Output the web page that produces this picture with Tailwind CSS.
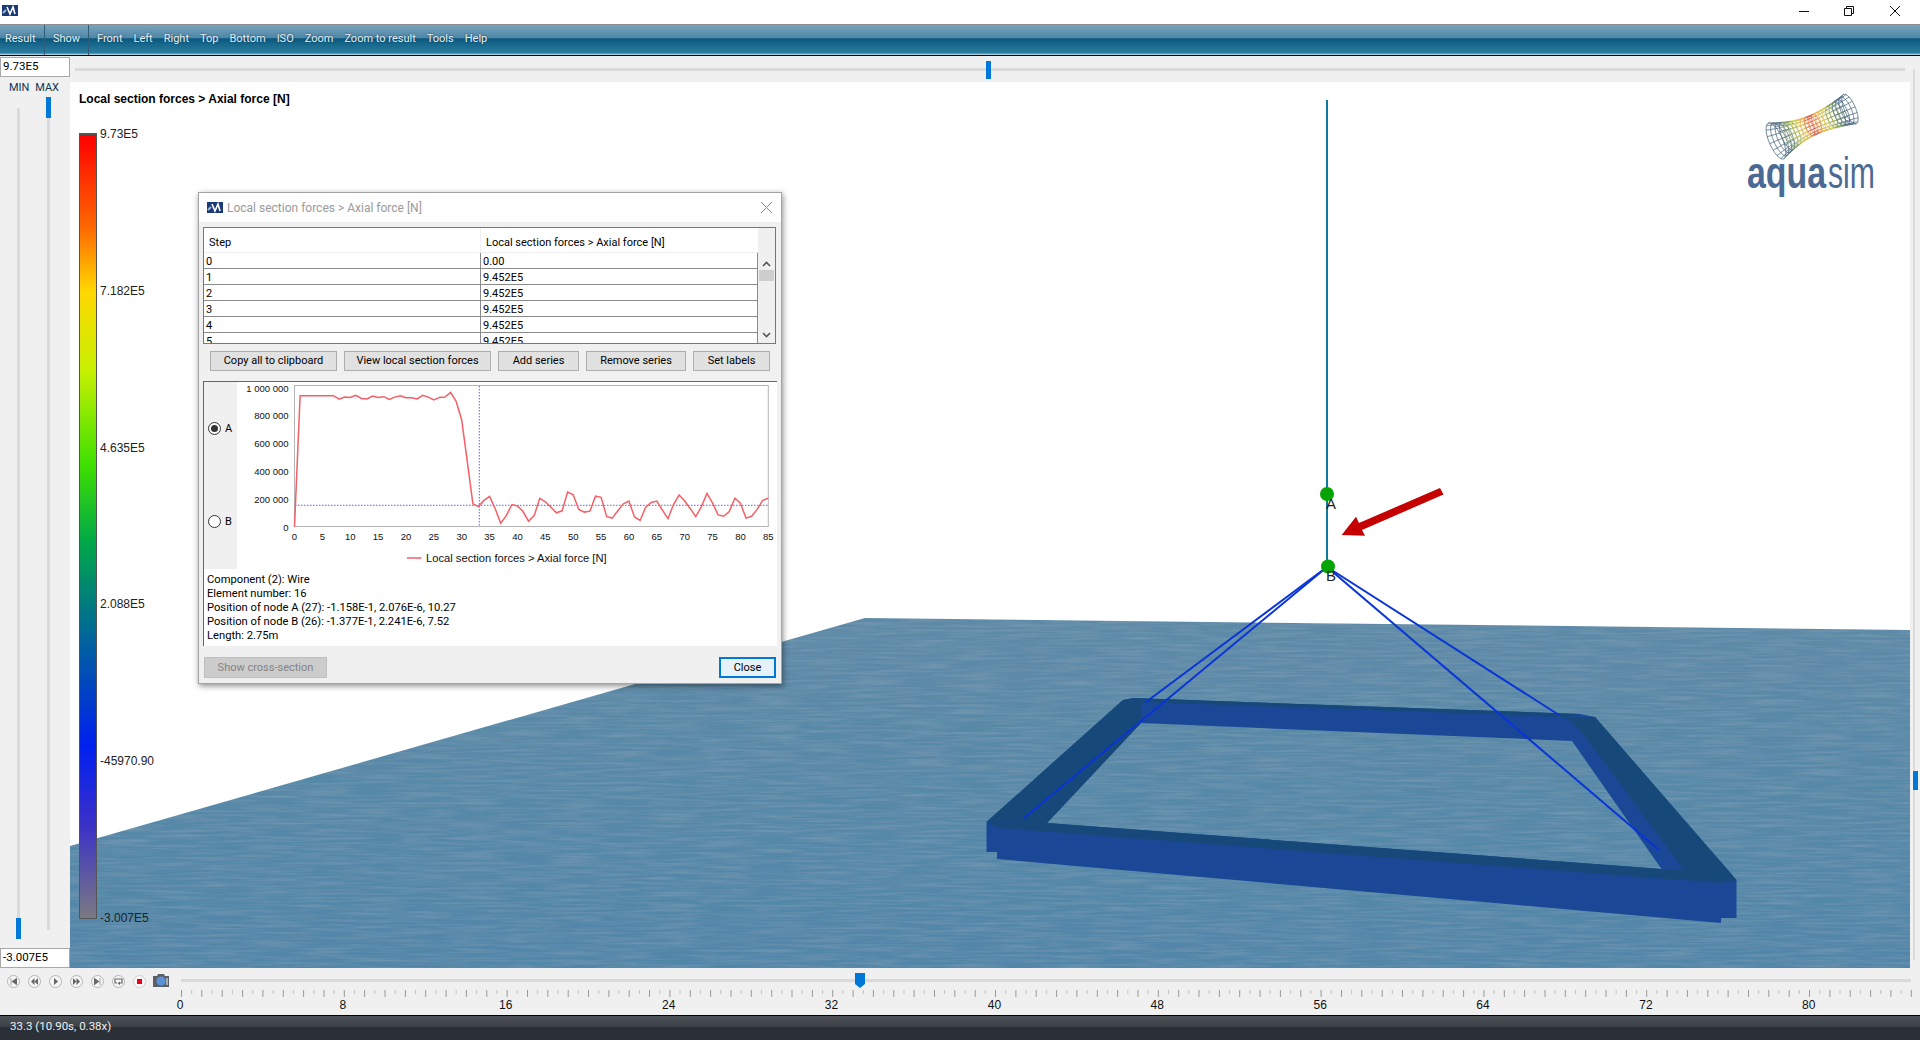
<!DOCTYPE html>
<html lang="en">
<head>
    <meta charset="UTF-8">
    <title>Aquasim result viewer</title>
    <script src="https://cdn.jsdelivr.net/npm/@tailwindcss/browser@4"></script>
</head>
<body class="w-[1920px] h-[1040px] overflow-hidden flex flex-col bg-[#f0f0f0] text-black text-[11px] font-['Roboto',sans-serif]">
    <!-- Title bar -->
    <div class="h-6 shrink-0 bg-white flex items-center justify-between">
        <svg class="ml-[2px] mb-[3px]" width="16" height="11" viewBox="0 0 16 11"><rect width="16" height="11" fill="#1b3a78"/><path d="M5 2 8 9 11 2 13 9" fill="none" stroke="#fff" stroke-width="1.6"/><path d="M1 8 4 5" stroke="#9fb4d8" stroke-width="2"/></svg>
        <div class="flex items-center text-black mb-[2px]">
            <svg width="10" height="10" viewBox="0 0 10 10" class="mr-[35px]"><path d="M0 5.5H10" stroke="#111" stroke-width="1"/></svg>
            <svg width="10" height="10" viewBox="0 0 10 10" class="mr-[36px]"><path d="M.5 2.5h7v7h-7zM2.5 2.5v-2h7v7h-2" fill="none" stroke="#111"/></svg>
            <svg width="10" height="10" viewBox="0 0 10 10" class="mr-[20px]"><path d="M0 0 10 10M10 0 0 10" stroke="#111"/></svg>
        </div>
    </div>

    <!-- Toolbar -->
    <div class="h-8 shrink-0 flex items-center border-t border-[#8b8f92] border-b border-b-black text-[#e4f0f6] text-[11px] [text-shadow:0_0_2px_#0b3b58] bg-[linear-gradient(#79a3bc_0%,#4f87a8_42%,#0b587f_46%,#2c7fa0_94%,#9fd0e2_97%)]">
        <span class="w-[45px] h-full flex items-center pl-[5px] pb-[2px] border-r border-[#2e5b75]">Result</span>
        <span class="w-[44px] h-full flex items-center pl-[8px] pb-[2px] border-r border-[#2e5b75]">Show</span>
        <div class="flex items-center pl-[8px] pb-[2px] gap-[11px]">
            <span>Front</span><span>Left</span><span>Right</span><span>Top</span><span>Bottom</span><span>ISO</span><span>Zoom</span><span>Zoom to result</span><span>Tools</span><span>Help</span>
        </div>
    </div>

    <!-- Middle area -->
    <div class="flex-1 min-h-0 flex relative">
        <!-- Min / max column -->
        <div class="w-[70px] shrink-0 flex flex-col">
            <div class="mt-px h-5 border border-[#a8a8a8] bg-white px-[2px] leading-[16px] text-[11.5px]">9.73E5</div>
            <div class="flex justify-between pl-[9px] pr-[11px] mt-[4px] text-[11px] text-[#123456] leading-[14px]"><span>MIN</span><span>MAX</span></div>
            <div class="flex-1 flex pl-[17px] gap-[27px]">
                <div class="relative w-[3px] bg-[#dadada] mt-[13px] mb-[9px]">
                    <div class="absolute -left-[1px] bottom-0 w-[5px] h-[21px] bg-[#0078d7]"></div>
                </div>
                <div class="relative w-[3px] bg-[#dadada] mt-[13px] mb-[18px]">
                    <div class="absolute -left-[1px] -top-[11px] w-[5px] h-[21px] bg-[#0078d7]"></div>
                </div>
            </div>
            <div class="h-[20px] border border-[#a8a8a8] bg-white px-[2px] leading-[16px] text-[11.5px]">-3.007E5</div>
        </div>

        <div class="flex-1 min-w-0 flex flex-col">
            <!-- Top slider -->
            <div class="h-[26px] shrink-0 relative flex items-center pl-[5px] pr-[15px] pt-[1px]">
                <div class="w-full h-[3px] bg-[#dadada]"></div>
                <div class="absolute left-[916px] top-[5px] w-[5px] h-[18px] bg-[#0078d7]"></div>
            </div>

            <div class="flex-1 min-h-0 flex">
                <!-- 3D viewport -->
                <div class="relative flex-1 bg-white overflow-hidden">
                    <svg id="scene" class="absolute inset-0" width="1840" height="886" viewBox="70 82 1840 886">
                        <defs>
                            <linearGradient id="sea" x1="0" y1="0" x2="0" y2="1"><stop offset="0" stop-color="#5d8aa7"/><stop offset="1" stop-color="#5186a8"/></linearGradient>
                            <filter id="water" x="0" y="0" width="100%" height="100%">
                                <feTurbulence type="fractalNoise" baseFrequency="0.02 0.4" numOctaves="3" seed="4" result="n"/>
                                <feColorMatrix in="n" type="matrix" values="0 0 0 0 1  0 0 0 0 1  0 0 0 0 1  0.14 0 0 0 -0.05" result="w"/>
                                <feComposite in="w" in2="SourceGraphic" operator="in" result="t"/>
                                <feMerge><feMergeNode in="SourceGraphic"/><feMergeNode in="t"/></feMerge>
                            </filter>
                        </defs>
                        <polygon points="70,846 865,618 1910,630 1910,968 70,968" fill="url(#sea)" filter="url(#water)"/>

                        <!-- floating frame -->
                        <polygon points="986.5,822 1123,700 1133.5,698 1580,714 1595,717 1736.5,880 1736.5,918 1721,918 1721,923 997,859 997,852 986.5,852 986.5,822 1047,823 1661.5,869 1572,741 1141,723 1047,823" fill="#1a4896" fill-rule="evenodd"/>
                        <polygon points="986.5,822 1123,700 1133.5,698 1141,702 1141,723 1047,823" fill="#16497a"/>
                        <polygon points="1133.5,698 1580,714 1565,717 1141,702" fill="#16497a"/>
                        <polygon points="1565,717 1595,717 1736.5,880 1720,883 1684,870 1580,730" fill="#16497a"/>
                        <polygon points="986.5,822 1047,823 1661.5,869 1684,870 1736.5,880 1720,883 998,828" fill="#16497a"/>

                        <!-- wires -->
                        <g stroke="#0a35d6" stroke-width="2" fill="none">
                            <path d="M1327 567 1146 702"/>
                            <path d="M1327 567 1024 818"/>
                            <path d="M1327 567 1559 715"/>
                            <path d="M1327 567 1659 850"/>
                        </g>
                        <path d="M1327 100V567" stroke="#0e7a9e" stroke-width="2"/>
                        <circle cx="1327" cy="494" r="7" fill="#04a404"/>
                        <circle cx="1328" cy="566.5" r="7" fill="#04a404"/>
                        <text x="1326" y="509" font-family="Liberation Sans" font-size="15" fill="#222">A</text>
                        <text x="1326" y="581" font-family="Liberation Sans" font-size="15" fill="#222">B</text>

                        <!-- red arrow -->
                        <polygon points="1440,488 1443.5,494.5 1362,530 1365,535.7 1341.7,535 1356,516.7 1359,523" fill="#c40000"/>

                        <!-- logo -->
                        <g id="mesh" fill="none" stroke-width="0.7"></g>
                        <text x="1747" y="188" font-family="Liberation Sans" font-weight="700" font-size="44" fill="#4a6a94" textLength="79" lengthAdjust="spacingAndGlyphs">aqua</text>
                        <text x="1828" y="188" font-family="Liberation Sans" font-size="44" fill="#4a6a94" textLength="47" lengthAdjust="spacingAndGlyphs">sim</text>
                    </svg>

                    <div class="relative pl-[9px] pt-[10px] font-bold text-[12px] leading-[14px] font-['Liberation_Sans',Arial,sans-serif]">Local section forces &gt; Axial force [N]</div>

                    <!-- Colour scale -->
                    <div class="absolute left-[9px] top-[51px] w-[18px] h-[786px] border border-[#555] border-t-2 bg-[linear-gradient(#ff0000_0%,#ff6a00_12%,#ffd800_20%,#c8f000_30%,#40e000_42%,#00a848_52%,#007a80_60%,#0020f0_78%,#3a30c8_88%,#7a7a82_100%)]"></div>
                    <div class="absolute left-[30px] top-[45px] h-[798px] flex flex-col justify-between text-[12px] leading-[14px] text-[#222] font-['Liberation_Sans',Arial,sans-serif]">
                        <span>9.73E5</span><span>7.182E5</span><span>4.635E5</span><span>2.088E5</span><span>-45970.90</span><span>-3.007E5</span>
                    </div>
                </div>
                <!-- Right slider strip -->
                <div class="w-[10px] shrink-0 relative">
                    <div class="absolute left-[3px] -top-[13px] bottom-[8px] w-[2px] bg-[#dadada]"></div>
                    <div class="absolute left-[3px] top-[689px] w-[5px] h-[19px] bg-[#0078d7]"></div>
                </div>
            </div>
        </div>

        <!-- Chart dialog -->
        <div class="absolute left-[198px] top-[136px] w-[584px] h-[492px] flex flex-col bg-[#f0f0f0] border border-[#a4a4a4] shadow-[1px_2px_6px_rgba(0,0,0,0.45)]">
            <div class="h-[29px] shrink-0 bg-white flex items-center pl-[8px] text-[#9a9a9a] text-[12px]">
                <svg width="16" height="11" viewBox="0 0 16 11"><rect width="16" height="11" fill="#1b3a78"/><path d="M5 2 8 9 11 2 13 9" fill="none" stroke="#fff" stroke-width="1.6"/><path d="M1 8 4 5" stroke="#9fb4d8" stroke-width="2"/></svg>
                <span class="ml-[4px] flex-1">Local section forces &gt; Axial force [N]</span>
                <svg class="mr-[9px]" width="11" height="11" viewBox="0 0 11 11"><path d="M0 0 11 11M11 0 0 11" stroke="#8a8a8a"/></svg>
            </div>

            <!-- Table -->
            <div class="mt-[5px] ml-[4px] w-[573px] h-[117px] shrink-0 border border-[#777] bg-white flex overflow-hidden">
                <div class="flex-1 min-w-0">
                    <div class="h-[25px] flex items-center border-b border-[#f0f0f0]">
                        <span class="w-[277px] pl-[5px] pt-[7px] border-r border-[#f0f0f0] h-full flex items-center">Step</span>
                        <span class="pl-[5px] pt-[7px]">Local section forces &gt; Axial force [N]</span>
                    </div>
                    <div class="flex h-4 leading-[18px] border-b border-[#8a8a8a] border-r"><span class="w-[277px] pl-[2px] border-r border-[#8a8a8a]">0</span><span class="pl-[2px]">0.00</span></div>
                    <div class="flex h-4 leading-[18px] border-b border-[#8a8a8a] border-r"><span class="w-[277px] pl-[2px] border-r border-[#8a8a8a]">1</span><span class="pl-[2px]">9.452E5</span></div>
                    <div class="flex h-4 leading-[18px] border-b border-[#8a8a8a] border-r"><span class="w-[277px] pl-[2px] border-r border-[#8a8a8a]">2</span><span class="pl-[2px]">9.452E5</span></div>
                    <div class="flex h-4 leading-[18px] border-b border-[#8a8a8a] border-r"><span class="w-[277px] pl-[2px] border-r border-[#8a8a8a]">3</span><span class="pl-[2px]">9.452E5</span></div>
                    <div class="flex h-4 leading-[18px] border-b border-[#8a8a8a] border-r"><span class="w-[277px] pl-[2px] border-r border-[#8a8a8a]">4</span><span class="pl-[2px]">9.452E5</span></div>
                    <div class="flex h-4 leading-[18px] border-r border-[#8a8a8a]"><span class="w-[277px] pl-[2px] border-r border-[#8a8a8a]">5</span><span class="pl-[2px]">9.452E5</span></div>
                </div>
                <!-- Scrollbar -->
                <div class="w-[17px] shrink-0 bg-[#f0f0f0] flex flex-col items-center pt-[33px]">
                    <svg width="9" height="6" viewBox="0 0 9 6"><path d="M1 5 4.5 1.5 8 5" fill="none" stroke="#555" stroke-width="1.6"/></svg>
                    <div class="mt-[3px] w-[15px] h-[11px] bg-[#cdcdcd]"></div>
                    <svg class="mt-[51px]" width="9" height="6" viewBox="0 0 9 6"><path d="M1 1 4.5 4.5 8 1" fill="none" stroke="#555" stroke-width="1.6"/></svg>
                </div>
            </div>

            <!-- Table buttons -->
            <div class="mt-[7px] ml-[11px] flex gap-[7px] h-5 shrink-0">
                <button class="w-[127px] bg-[#e1e1e1] border border-[#adadad]">Copy all to clipboard</button>
                <button class="w-[147px] bg-[#e1e1e1] border border-[#adadad]">View local section forces</button>
                <button class="w-[81px] bg-[#e1e1e1] border border-[#adadad]">Add series</button>
                <button class="w-[100px] bg-[#e1e1e1] border border-[#adadad]">Remove series</button>
                <button class="w-[77px] bg-[#e1e1e1] border border-[#adadad]">Set labels</button>
            </div>

            <!-- Chart + info frame -->
            <div class="mt-[10px] ml-[4px] w-[574px] h-[265px] shrink-0 bg-white border-t border-l border-[#666]">
                <div class="flex h-[187px]">
                    <div class="w-[33px] shrink-0 bg-[#f0f0f0] pl-[4px] pt-[40px] flex flex-col gap-[80px]">
                        <label class="flex items-center gap-[4px] h-[13px]"><span class="w-[13px] h-[13px] rounded-full border border-[#333] flex items-center justify-center bg-white"><span class="w-[7px] h-[7px] rounded-full bg-[#333]"></span></span><span class="pt-[2px]">A</span></label>
                        <label class="flex items-center gap-[4px] h-[13px]"><span class="w-[13px] h-[13px] rounded-full border border-[#333] bg-white"></span><span class="pt-[2px]">B</span></label>
                    </div>
                    <svg id="chart" width="540" height="187" viewBox="237 383 540 187" font-family="Liberation Sans">
                        <rect x="294.5" y="386.5" width="473.8" height="141" fill="none" stroke="#b4b4b4"/>
                        <path d="M479.3 387V528M295 506.3H768" stroke="#3a3af0" stroke-width="0.8" stroke-dasharray="1.5 1.5" fill="none"/>
                        <polyline id="series" fill="none" stroke="#f55f66" stroke-width="1.5"/>
                        <path d="M407 559H421.5" stroke="#f55f66" stroke-width="1.5"/>
                        <text x="426" y="563" font-size="11.2" fill="#111">Local section forces &gt; Axial force [N]</text>
                    </svg>
                </div>
                <div class="pt-[4px] pl-[3px] leading-[14px] text-[11.2px]">
                    <div>Component (2): Wire</div>
                    <div>Element number: 16</div>
                    <div>Position of node A (27): -1.158E-1, 2.076E-6, 10.27</div>
                    <div>Position of node B (26): -1.377E-1, 2.241E-6, 7.52</div>
                    <div>Length: 2.75m</div>
                </div>
            </div>

            <!-- Footer -->
            <div class="mt-[11px] mx-[5px] flex justify-between h-[21px] shrink-0">
                <button class="w-[123px] pt-[2px] bg-[#cccccc] border border-[#bfbfbf] text-[#838383]">Show cross-section</button>
                <button class="w-[57px] pt-[1px] bg-[#e5f1fb] border-2 border-[#0078d7]">Close</button>
            </div>
        </div>
    </div>

    <!-- Playback bar -->
    <div class="h-[47px] shrink-0 flex">
        <div class="w-[170px] shrink-0 flex items-start pl-[7px] pt-[7px] gap-[8px]">
            <span class="w-[13px] h-[13px] rounded-full border border-[#b5b5b5] bg-[#f6f6f6] flex items-center justify-center"><svg width="7" height="7" viewBox="0 0 7 7"><path d="M1 0V7M7 0V7L2 3.5Z" fill="#666" stroke="#666" stroke-width=".6"/></svg></span>
            <span class="w-[13px] h-[13px] rounded-full border border-[#b5b5b5] bg-[#f6f6f6] flex items-center justify-center"><svg width="7" height="7" viewBox="0 0 7 7"><path d="M3.5 0V7L0 3.5ZM7 0V7L3.5 3.5Z" fill="#666"/></svg></span>
            <span class="w-[13px] h-[13px] rounded-full border border-[#b5b5b5] bg-[#f6f6f6] flex items-center justify-center"><svg width="7" height="7" viewBox="0 0 7 7"><path d="M2 0V7L6 3.5Z" fill="#666"/></svg></span>
            <span class="w-[13px] h-[13px] rounded-full border border-[#b5b5b5] bg-[#f6f6f6] flex items-center justify-center"><svg width="7" height="7" viewBox="0 0 7 7"><path d="M0 0V7L3.5 3.5ZM3.5 0V7L7 3.5Z" fill="#666"/></svg></span>
            <span class="w-[13px] h-[13px] rounded-full border border-[#b5b5b5] bg-[#f6f6f6] flex items-center justify-center"><svg width="7" height="7" viewBox="0 0 7 7"><path d="M6 0V7M0 0V7L5 3.5Z" fill="#666" stroke="#666" stroke-width=".6"/></svg></span>
            <span class="w-[13px] h-[13px] rounded-full border border-[#b5b5b5] bg-[#f6f6f6] flex items-center justify-center"><svg width="9" height="7" viewBox="0 0 9 7"><path d="M3 5H1V1H8V5H5" fill="none" stroke="#666" stroke-width="1.2"/><path d="M6 3.5V7L3.5 5.2Z" fill="#666"/></svg></span>
            <span class="w-[13px] h-[13px] rounded-full border border-[#d0d0d0] bg-[#f8f8f8] flex items-center justify-center"><span class="w-[5px] h-[5px] bg-[#e8001c]"></span></span>
            <svg class="-ml-[1px] -mt-[1px]" width="16" height="13" viewBox="0 0 16 13"><path d="M0 2H4L5 0H11L12 2H16V13H0Z" fill="#5a6068"/><circle cx="8" cy="7" r="4.6" fill="#5b92d8"/><rect x="13" y="4" width="2" height="7" fill="#a8adb3"/></svg>
        </div>
        <svg id="ruler" width="1750" height="47" viewBox="170 968 1750 47" font-family="Liberation Sans">
            <rect x="181" y="979" width="1730" height="3" fill="#dadada"/>
            <path d="M855 973H865V984L860 988L855 984Z" fill="#0078d7"/>
        </svg>
    </div>

    <!-- Status bar -->
    <div class="h-[25px] shrink-0 border-t border-black pl-[10px] pb-[2px] flex items-center text-[#f0f0f0] text-[11.5px] bg-[linear-gradient(#4d5359_0%,#3b4047_45%,#2a2e35_46%,#2c3037_100%)]">33.3 (10.90s, 0.38x)</div>

    <script>
        const NS = 'http://www.w3.org/2000/svg';

        function svgEl(parent, name, attrs, text) {
            const el = document.createElementNS(NS, name);
            for (const k in attrs) el.setAttribute(k, attrs[k]);
            if (text !== undefined) el.textContent = text;
            parent.appendChild(el);
            return el;
        }

        // Axial force per step, in kN
        const force = [0,945,945,945,945,945,945,945,920,935,932,948,925,922,942,932,938,918,935,945,930,930,922,948,935,915,933,935,970,905,770,470,165,145,190,218,130,25,80,160,150,110,40,80,205,180,140,100,115,250,230,125,105,112,220,212,72,62,115,165,185,70,45,140,175,185,120,58,160,228,185,130,72,145,240,170,85,75,110,205,170,62,75,125,190,205];
        const px = s => 294.5 + s * 473.8 / 85;
        const py = v => 527.7 - v * 0.1386;
        document.getElementById('series').setAttribute('points', force.map((v, i) => px(i).toFixed(1) + ',' + py(v).toFixed(1)).join(' '));

        const chart = document.getElementById('chart');
        for (let s = 0; s <= 85; s += 5) {
            svgEl(chart, 'text', { x: px(s), y: 541, 'font-size': 9.5, 'text-anchor': 'middle', fill: '#111' }, s);
        }
        ['0', '200 000', '400 000', '600 000', '800 000', '1 000 000'].forEach((label, i) => {
            svgEl(chart, 'text', { x: 288.5, y: 531.5 - i * 27.8, 'font-size': 9.5, 'text-anchor': 'end', fill: '#111' }, label);
        });

        // Timeline ruler
        const ruler = document.getElementById('ruler');
        const step = 20.35 / 2;
        for (let i = 0; i <= 170; i++) {
            const x = 181 + i * step;
            svgEl(ruler, 'rect', { x: x.toFixed(1), y: 990, width: 1, height: i % 2 ? 4 : 7, fill: i % 2 ? '#c4c4c4' : '#9a9a9a' });
        }
        for (let v = 0; v <= 80; v += 8) {
            svgEl(ruler, 'text', { x: 180 + v * 20.36, y: 1009, 'font-size': 12, 'text-anchor': 'middle', fill: '#111' }, v);
        }

        // Logo wireframe
        const mesh = document.getElementById('mesh');
        const A = [1776, 141], B = [1850, 109];
        const len = Math.hypot(B[0] - A[0], B[1] - A[1]);
        const d = [(B[0] - A[0]) / len, (B[1] - A[1]) / len];
        const n = [-d[1], d[0]];
        const radius = u => 10 + (u < 0.5 ? 9.5 : 6) * Math.pow(Math.abs(u - 0.5) * 2, 1.8);
        const colorAt = u => {
            const t = Math.abs(u - 0.5) * 2;
            if (t < 0.12) return '#e0503a';
            if (t < 0.3) return '#e8b040';
            if (t < 0.5) return '#c8c850';
            if (t < 0.7) return '#7a9a58';
            return '#3f5f78';
        };
        const point = (u, a) => {
            const r = radius(u);
            const c = [A[0] + (B[0] - A[0]) * u, A[1] + (B[1] - A[1]) * u];
            return [c[0] + n[0] * r * Math.cos(a) + d[0] * r * 0.35 * Math.sin(a), c[1] + n[1] * r * Math.cos(a) + d[1] * r * 0.35 * Math.sin(a)];
        };
        for (let i = 0; i <= 20; i++) {
            const u = i / 20;
            let pts = [];
            for (let j = 0; j <= 24; j++) pts.push(point(u, j / 24 * Math.PI * 2).map(v => v.toFixed(1)).join(','));
            svgEl(mesh, 'polyline', { points: pts.join(' '), stroke: colorAt(u) });
        }
        for (let j = 0; j < 16; j++) {
            const a = j / 16 * Math.PI * 2;
            for (let i = 0; i < 20; i++) {
                const p = point(i / 20, a), q = point((i + 1) / 20, a);
                svgEl(mesh, 'line', { x1: p[0], y1: p[1], x2: q[0], y2: q[1], stroke: colorAt((i + 0.5) / 20) });
            }
        }
    </script>
</body>
</html>
